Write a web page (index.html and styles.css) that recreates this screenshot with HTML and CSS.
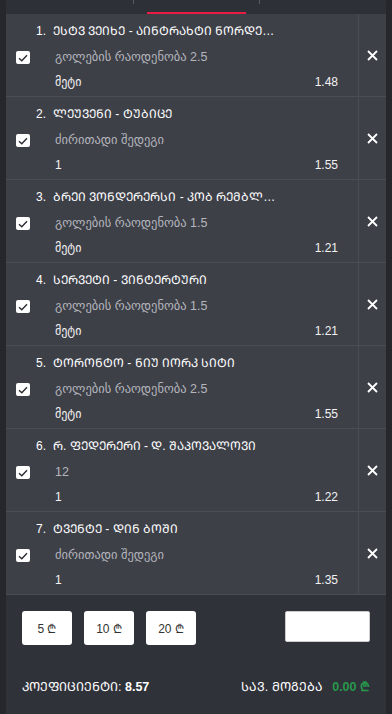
FILE: index.html
```html
<!DOCTYPE html>
<html lang="ka">
<head>
    <meta charset="UTF-8">
    <meta name="viewport" content="width=device-width, initial-scale=1.0">
    <title>ბილეთი</title>
    <link rel="stylesheet" href="styles.css">
</head>
<body>

<div class="slip">

    <div class="tabs">
        <div class="tab"></div>
        <div class="tab active"></div>
        <div class="tab"></div>
    </div>

    <div class="bets">

        <div class="bet">
            <div class="bet-main">
                <div class="bet-title"><span class="num">1.</span><span class="teams">ᲔᲡᲢᲕ ᲕᲔᲘᲮᲔ - ᲐᲘᲜᲢᲠᲐᲮᲢᲘ ᲜᲝᲠᲓᲔᲠᲨᲢᲔᲓᲢᲘ</span></div>
                <div class="bet-body">
                    <span class="check"><svg width="10" height="8" viewBox="0 0 10 8"><path d="M1 4.2 L3.8 6.8 L9 1.2" fill="none" stroke="#2b2d33" stroke-width="1.4"/></svg></span>
                    <div class="bet-lines">
                        <div class="market">გოლების რაოდენობა 2.5</div>
                        <div class="pick"><span>მეტი</span><span>1.48</span></div>
                    </div>
                </div>
            </div>
            <div class="bet-remove"><svg width="11" height="11" viewBox="0 0 11 11"><path d="M1 1 L10 10 M10 1 L1 10" stroke="#fff" stroke-width="1.8"/></svg></div>
        </div>

        <div class="bet">
            <div class="bet-main">
                <div class="bet-title"><span class="num">2.</span><span class="teams">ᲚᲔᲣᲕᲔᲜᲘ - ᲢᲣᲑᲘᲪᲔ</span></div>
                <div class="bet-body">
                    <span class="check"><svg width="10" height="8" viewBox="0 0 10 8"><path d="M1 4.2 L3.8 6.8 L9 1.2" fill="none" stroke="#2b2d33" stroke-width="1.4"/></svg></span>
                    <div class="bet-lines">
                        <div class="market">ძირითადი შედეგი</div>
                        <div class="pick"><span>1</span><span>1.55</span></div>
                    </div>
                </div>
            </div>
            <div class="bet-remove"><svg width="11" height="11" viewBox="0 0 11 11"><path d="M1 1 L10 10 M10 1 L1 10" stroke="#fff" stroke-width="1.8"/></svg></div>
        </div>

        <div class="bet">
            <div class="bet-main">
                <div class="bet-title"><span class="num">3.</span><span class="teams">ᲑᲠᲔᲘ ᲕᲝᲜᲓᲔᲠᲔᲠᲡᲘ - ᲙᲝᲑ ᲠᲔᲛᲑᲚᲔᲠᲡᲘ</span></div>
                <div class="bet-body">
                    <span class="check"><svg width="10" height="8" viewBox="0 0 10 8"><path d="M1 4.2 L3.8 6.8 L9 1.2" fill="none" stroke="#2b2d33" stroke-width="1.4"/></svg></span>
                    <div class="bet-lines">
                        <div class="market">გოლების რაოდენობა 1.5</div>
                        <div class="pick"><span>მეტი</span><span>1.21</span></div>
                    </div>
                </div>
            </div>
            <div class="bet-remove"><svg width="11" height="11" viewBox="0 0 11 11"><path d="M1 1 L10 10 M10 1 L1 10" stroke="#fff" stroke-width="1.8"/></svg></div>
        </div>

        <div class="bet">
            <div class="bet-main">
                <div class="bet-title"><span class="num">4.</span><span class="teams">ᲡᲔᲠᲕᲔᲢᲘ - ᲕᲘᲜᲢᲔᲠᲢᲣᲠᲘ</span></div>
                <div class="bet-body">
                    <span class="check"><svg width="10" height="8" viewBox="0 0 10 8"><path d="M1 4.2 L3.8 6.8 L9 1.2" fill="none" stroke="#2b2d33" stroke-width="1.4"/></svg></span>
                    <div class="bet-lines">
                        <div class="market">გოლების რაოდენობა 1.5</div>
                        <div class="pick"><span>მეტი</span><span>1.21</span></div>
                    </div>
                </div>
            </div>
            <div class="bet-remove"><svg width="11" height="11" viewBox="0 0 11 11"><path d="M1 1 L10 10 M10 1 L1 10" stroke="#fff" stroke-width="1.8"/></svg></div>
        </div>

        <div class="bet">
            <div class="bet-main">
                <div class="bet-title"><span class="num">5.</span><span class="teams">ᲢᲝᲠᲝᲜᲢᲝ - ᲜᲘᲣ ᲘᲝᲠᲙ ᲡᲘᲢᲘ</span></div>
                <div class="bet-body">
                    <span class="check"><svg width="10" height="8" viewBox="0 0 10 8"><path d="M1 4.2 L3.8 6.8 L9 1.2" fill="none" stroke="#2b2d33" stroke-width="1.4"/></svg></span>
                    <div class="bet-lines">
                        <div class="market">გოლების რაოდენობა 2.5</div>
                        <div class="pick"><span>მეტი</span><span>1.55</span></div>
                    </div>
                </div>
            </div>
            <div class="bet-remove"><svg width="11" height="11" viewBox="0 0 11 11"><path d="M1 1 L10 10 M10 1 L1 10" stroke="#fff" stroke-width="1.8"/></svg></div>
        </div>

        <div class="bet">
            <div class="bet-main">
                <div class="bet-title"><span class="num">6.</span><span class="teams">Რ. ᲤᲔᲓᲔᲠᲔᲠᲘ - Დ. ᲨᲐᲞᲝᲕᲐᲚᲝᲕᲘ</span></div>
                <div class="bet-body">
                    <span class="check"><svg width="10" height="8" viewBox="0 0 10 8"><path d="M1 4.2 L3.8 6.8 L9 1.2" fill="none" stroke="#2b2d33" stroke-width="1.4"/></svg></span>
                    <div class="bet-lines">
                        <div class="market">12</div>
                        <div class="pick"><span>1</span><span>1.22</span></div>
                    </div>
                </div>
            </div>
            <div class="bet-remove"><svg width="11" height="11" viewBox="0 0 11 11"><path d="M1 1 L10 10 M10 1 L1 10" stroke="#fff" stroke-width="1.8"/></svg></div>
        </div>

        <div class="bet">
            <div class="bet-main">
                <div class="bet-title"><span class="num">7.</span><span class="teams">ᲢᲕᲔᲜᲢᲔ - ᲓᲘᲜ ᲑᲝᲨᲘ</span></div>
                <div class="bet-body">
                    <span class="check"><svg width="10" height="8" viewBox="0 0 10 8"><path d="M1 4.2 L3.8 6.8 L9 1.2" fill="none" stroke="#2b2d33" stroke-width="1.4"/></svg></span>
                    <div class="bet-lines">
                        <div class="market">ძირითადი შედეგი</div>
                        <div class="pick"><span>1</span><span>1.35</span></div>
                    </div>
                </div>
            </div>
            <div class="bet-remove"><svg width="11" height="11" viewBox="0 0 11 11"><path d="M1 1 L10 10 M10 1 L1 10" stroke="#fff" stroke-width="1.8"/></svg></div>
        </div>

    </div>

    <div class="slip-footer">
        <div class="stakes">
            <button class="stake">5 ₾</button>
            <button class="stake">10 ₾</button>
            <button class="stake">20 ₾</button>
            <input type="text" class="stake-input">
        </div>
        <div class="totals">
            <div>ᲙᲝᲔᲤᲘᲪᲘᲔᲜᲢᲘ: <b>8.57</b></div>
            <div>ᲡᲐᲕ. ᲛᲝᲒᲔᲑᲐ <b class="win">0.00 ₾</b></div>
        </div>
    </div>

</div>

</body>
</html>
```

FILE: styles.css
```css
body {
    margin: 0;
    background-color: #26272c;
    font-family: "Liberation Sans", "DejaVu Sans", sans-serif;
    font-size: 12px;
    color: #fff;
}
.slip {
    margin: 0 6px;
    background-color: #30323a;
    min-height: 714px;
}
.tabs {
    display: flex;
    height: 14px;
    background-color: #2e3037;
}
.tab {
    flex: 1;
    position: relative;
}
.tab + .tab::before {
    content: "";
    position: absolute;
    left: 0;
    top: 0;
    width: 1px;
    height: 4px;
    background-color: #5a5c63;
}
.tab.active::after {
    content: "";
    position: absolute;
    left: 14px;
    right: 13px;
    bottom: 0;
    height: 2px;
    background-color: #ec1b43;
}
.bet {
    display: flex;
    background-color: #3e4048;
    border-bottom: 1px solid #4b4d55;
}
.bet-main {
    flex: 1;
    min-width: 0;
    padding: 7px 20px 4px 10px;
    border-right: 1px solid #4b4d55;
}
.bet-title {
    display: flex;
    height: 20px;
    line-height: 20px;
    padding-left: 20px;
    font-size: 12px;
    white-space: nowrap;
}
.num {
    width: 17px;
    flex: none;
}
.teams {
    overflow: hidden;
    text-overflow: ellipsis;
    max-width: 227px;
}
.bet-body {
    display: flex;
    align-items: flex-start;
}
.check {
    flex: none;
    width: 14px;
    height: 13px;
    margin-top: 10px;
    background-color: #fff;
    border-radius: 2px;
    display: flex;
    align-items: center;
    justify-content: center;
}
.bet-lines {
    flex: 1;
    margin-left: 25px;
}
.market {
    margin-top: 6px;
    height: 20px;
    line-height: 20px;
    font-size: 12.5px;
    color: #b4b6bd;
}
.pick {
    display: flex;
    justify-content: space-between;
    margin-top: 5px;
    height: 20px;
    line-height: 20px;
    color: #f2f2f2;
}
.bet-remove {
    width: 27px;
    flex: none;
    display: flex;
    align-items: center;
    justify-content: center;
}
.slip-footer {
    padding: 16px 16px 0 16px;
}
.stakes {
    display: flex;
    align-items: flex-start;
    gap: 12px;
}
.stake {
    width: 50px;
    height: 34px;
    border: none;
    border-radius: 3px;
    background-color: #fff;
    color: #333;
    font-family: "Liberation Sans", "DejaVu Sans", sans-serif;
    font-size: 12px;
    padding: 0;
}
.stake-input {
    margin-left: auto;
    width: 85px;
    height: 31px;
    box-sizing: border-box;
    border: 1px solid #ccc;
    border-radius: 2px;
    background-color: #fff;
}
.totals {
    display: flex;
    justify-content: space-between;
    align-items: center;
    margin-top: 33px;
    font-size: 12.5px;
}
.totals b {
    font-weight: bold;
}
.win {
    color: #27984a;
    margin-left: 6px;
}
```
